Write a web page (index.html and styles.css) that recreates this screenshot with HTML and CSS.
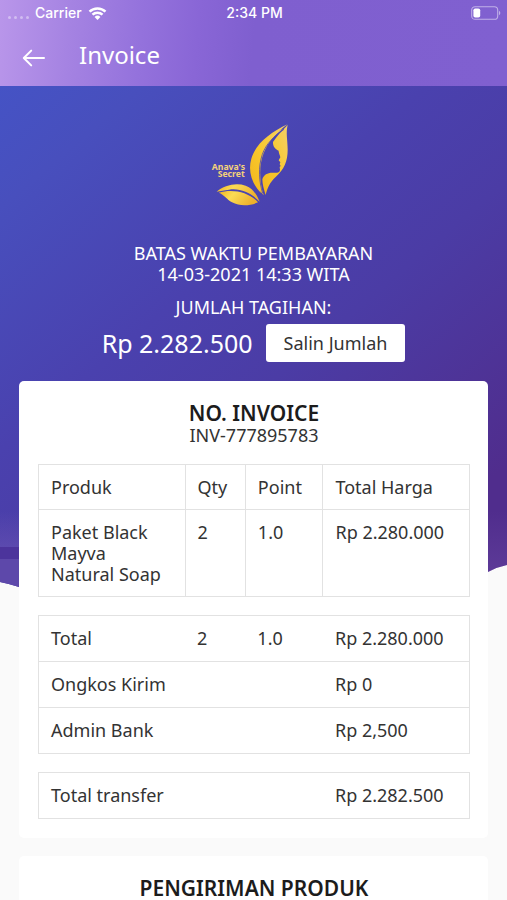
FILE: index.html
```html
<!DOCTYPE html>
<html lang="id">
<head>
<meta charset="utf-8">
<meta name="viewport" content="width=device-width, initial-scale=1">
<title>Invoice</title>
<link rel="stylesheet" href="styles.css">
</head>
<body>
<header class="top">
  <div class="status">
    <div class="status-left">
      <span class="dots"><i></i><i></i><i></i><i></i></span>
      <span>Carrier</span>
      <svg class="wifi" viewBox="0 0 20 15" aria-hidden="true">
        <path d="M1.6 5.6a12 12 0 0 1 16.8 0M4.7 8.8a7.6 7.6 0 0 1 10.6 0" fill="none" stroke="#fff" stroke-width="2.6"/>
        <path d="M6.9 11.2a4.4 4.4 0 0 1 6.2 0L10 14.4z" fill="#fff"/>
      </svg>
    </div>
    <span>2:34 PM</span>
    <div class="status-right">
      <svg class="battery" viewBox="0 0 30 14" aria-hidden="true">
        <rect x="0.7" y="0.7" width="26" height="12.6" rx="3.4" fill="none" stroke="#fff" stroke-opacity=".5" stroke-width="1.1"/>
        <rect x="2.4" y="2.4" width="6.8" height="9.2" rx="1.8" fill="#fff"/>
        <path d="M28 4.8a2.5 2.5 0 0 1 0 4.4z" fill="#fff" fill-opacity=".5"/>
      </svg>
    </div>
  </div>
  <div class="bar">
    <button class="back" type="button" aria-label="Kembali">
      <svg viewBox="0 0 24 18" aria-hidden="true"><path d="M22 9H2M9.2 1.6L1.8 9l7.4 7.4" fill="none" stroke="#fff" stroke-width="2" stroke-linecap="round" stroke-linejoin="round"/></svg>
    </button>
    <h1>Invoice</h1>
  </div>
</header>
<main>
  <svg class="backdrop" viewBox="0 0 507 502" preserveAspectRatio="none" aria-hidden="true">
    <defs>
      <linearGradient id="sky" gradientUnits="userSpaceOnUse" x1="0" y1="0" x2="400" y2="470">
        <stop offset="0" stop-color="#4553c5"/>
        <stop offset=".15" stop-color="#484fbd"/>
        <stop offset=".45" stop-color="#4a41ae"/>
        <stop offset=".65" stop-color="#4b3ca5"/>
        <stop offset="1" stop-color="#502d8d"/>
      </linearGradient>
      <linearGradient id="haze" x1="0" y1="0" x2="0" y2="1">
        <stop offset="0" stop-color="#8c6cc0" stop-opacity="0"/>
        <stop offset="1" stop-color="#8c6cc0" stop-opacity=".26"/>
      </linearGradient>
      <clipPath id="wave"><path d="M0 0H507V479Q497 481 488 486Q250 600 19 501Q10 498 0 496Z"/></clipPath>
    </defs>
    <g clip-path="url(#wave)">
      <rect width="507" height="502" fill="url(#sky)"/>
      <rect y="425" width="253" height="36" fill="url(#haze)"/>
      <rect y="461" width="253" height="12" fill="#4c349c"/>
      <rect y="473" width="253" height="30" fill="#5d48aa"/>
      <rect x="253" y="425" width="254" height="77" fill="url(#haze)"/>
    </g>
  </svg>
  <section class="hero">
    <svg class="logo" viewBox="58 36 264 252" role="img" aria-label="Anava's Secret">
      <defs>
        <linearGradient id="gold" x1="0" y1="0" x2="1" y2="0.3">
          <stop offset="0" stop-color="#f0b21f"/>
          <stop offset=".4" stop-color="#fbdc55"/>
          <stop offset="1" stop-color="#eeb02b"/>
        </linearGradient>
        <linearGradient id="petal" x1="0" y1="1" x2="1" y2="0">
          <stop offset="0" stop-color="#f3b61c"/>
          <stop offset=".5" stop-color="#f8c92f"/>
          <stop offset="1" stop-color="#f4cf6a"/>
        </linearGradient>
      </defs>
      <path fill="url(#petal)" d="M291 43C240 66 194 102 182 146C171 184 184 222 211 249C199 206 198 160 220 121C238 88 260 66 291 43Z"/>
      <path fill="url(#petal)" d="M278 56C236 76 196 106 185 148C176 186 192 226 219 256C206 214 204 168 219 129C232 96 252 74 278 56Z"/>
      <path fill="url(#petal)" d="M291 45C285 68 291 91 291 119C291 153 281 177 255 201C237 218 230 234 225 255C220 240 215 222 215 208C219 193 233 187 247 188C260 189 268 187 268 179L267 171L270 168L267 163L269 157L264 151L269 142C268 134 263 127 264 122C256 119 246 111 247 96C259 77 276 61 291 45Z"/>
      <path fill="url(#gold)" d="M78 245C101 226 135 217 165 227C187 235 197 252 207 275C183 250 151 234 115 239C101 241 89 243 78 245Z"/>
      <path fill="url(#gold)" d="M84 248C127 236 174 246 202 277C178 288 147 289 124 277C108 268 101 254 84 248Z"/>
      <path fill="none" stroke="#4a45b3" stroke-width="2.4" d="M280 58C248 80 226 102 215 133C202 172 205 214 216 250"/>
      <text x="163" y="179" text-anchor="end">Anava's</text>
      <text x="162" y="200" text-anchor="end">Secret</text>
    </svg>
    <p>BATAS WAKTU PEMBAYARAN<br>14-03-2021 14:33 WITA</p>
    <p class="due">JUMLAH TAGIHAN:</p>
    <div class="amount">
      <strong>Rp 2.282.500</strong>
      <button class="copy" type="button">Salin Jumlah</button>
    </div>
  </section>
  <section class="card">
    <h2>NO. INVOICE</h2>
    <p class="number">INV-777895783</p>
    <table class="items">
      <colgroup><col class="c-name"><col class="c-qty"><col class="c-point"><col class="c-price"></colgroup>
      <thead><tr><th>Produk</th><th>Qty</th><th>Point</th><th>Total Harga</th></tr></thead>
      <tbody><tr><td>Paket Black Mayva<br>Natural Soap</td><td>2</td><td>1.0</td><td>Rp 2.280.000</td></tr></tbody>
    </table>
    <table class="sums">
      <colgroup><col class="c-name"><col class="c-qty"><col class="c-point"><col class="c-price"></colgroup>
      <tbody>
        <tr><th scope="row">Total</th><td>2</td><td>1.0</td><td>Rp 2.280.000</td></tr>
        <tr><th scope="row" colspan="3">Ongkos Kirim</th><td>Rp 0</td></tr>
        <tr><th scope="row" colspan="3">Admin Bank</th><td>Rp 2,500</td></tr>
      </tbody>
    </table>
    <table class="sums">
      <colgroup><col class="c-name"><col class="c-qty"><col class="c-point"><col class="c-price"></colgroup>
      <tbody><tr><th scope="row" colspan="3">Total transfer</th><td>Rp 2.282.500</td></tr></tbody>
    </table>
  </section>
  <section class="card">
    <h2>PENGIRIMAN PRODUK</h2>
  </section>
</main>
</body>
</html>
```
FILE: styles.css
```css
* { box-sizing: border-box; }

body {
  margin: 0;
  background: #fafafa;
  color: #333;
  font: 18px/21px "Noto Sans", sans-serif;
  height: 100vh;
  overflow: hidden;
}

h1, h2, p { margin: 0; }

.top {
  height: 86px;
  color: #fff;
  background: linear-gradient(95deg, #b996ea 0%, #a583e2 14%, #9472dc 28%, #8966d6 39%, #7f5fcf 50%, #8060d0 100%);
}

.status {
  display: grid;
  grid-template-columns: 1fr auto 1fr;
  align-items: center;
  height: 26px;
  padding: 0 6px 0 8px;
  font: 500 14px/16px Inter, sans-serif;
}

.status-left { display: flex; align-items: center; gap: 6px; }
.status-right { display: flex; justify-content: flex-end; }

.dots { display: flex; gap: 3px; padding-top: 8px; }
.dots i { width: 3px; height: 3px; border-radius: 50%; background: #fff; opacity: .4; }

.wifi { width: 19px; height: 15px; }
.battery { width: 30px; height: 14px; }

.bar {
  display: flex;
  align-items: center;
  gap: 33px;
  height: 60px;
  padding: 0 22px;
}

.bar h1 { font-size: 24px; line-height: 28px; font-weight: 400; padding-bottom: 2px; }

.back {
  display: flex;
  padding: 4px 0 0;
  border: 0;
  background: none;
}
.back svg { width: 24px; height: 18px; }

main {
  position: relative;
  padding: 0 19px;
}

.backdrop {
  position: absolute;
  top: 0;
  left: 0;
  z-index: -1;
  width: 100%;
  height: 502px;
}

.hero {
  display: flex;
  flex-direction: column;
  align-items: center;
  padding: 36px 0 19px;
  color: #fff;
  text-align: center;
}

.logo { width: 88px; height: 84px; margin-bottom: 37px; overflow: visible; }
.logo text { font: 700 26px "Noto Sans", sans-serif; fill: #f3d27a; }

.due { margin: 12px 0 6px; }

.amount { display: flex; align-items: center; gap: 13px; }
.amount strong { font-size: 25px; line-height: 28px; font-weight: 400; }

.copy {
  padding: 8px 18px;
  border: 0;
  border-radius: 3px;
  background: #fff;
  color: #333;
  font: inherit;
  line-height: 22px;
}

.card {
  margin-bottom: 18px;
  padding: 20px 18px 19px 19px;
  border-radius: 5px;
  background: #fff;
  text-align: center;
}

.card h2 {
  color: #1c1c1c;
  font-size: 21px;
  line-height: 24px;
  font-weight: 600;
}

.number { margin-bottom: 18px; }

table {
  width: 100%;
  table-layout: fixed;
  border-collapse: collapse;
  border: 1px solid #e2e2e2;
  text-align: left;
}

table + table { margin-top: 18px; }

.c-name { width: 34%; }
.c-qty { width: 14%; }
.c-point { width: 18%; }
.c-price { width: 34%; }

th, td {
  padding: 12px 0 12px 12px;
  font-weight: 400;
  vertical-align: top;
}

.items th, .items td {
  padding-bottom: 11px;
  border: 1px solid #e2e2e2;
}
.sums tr + tr { border-top: 1px solid #e2e2e2; }
```
